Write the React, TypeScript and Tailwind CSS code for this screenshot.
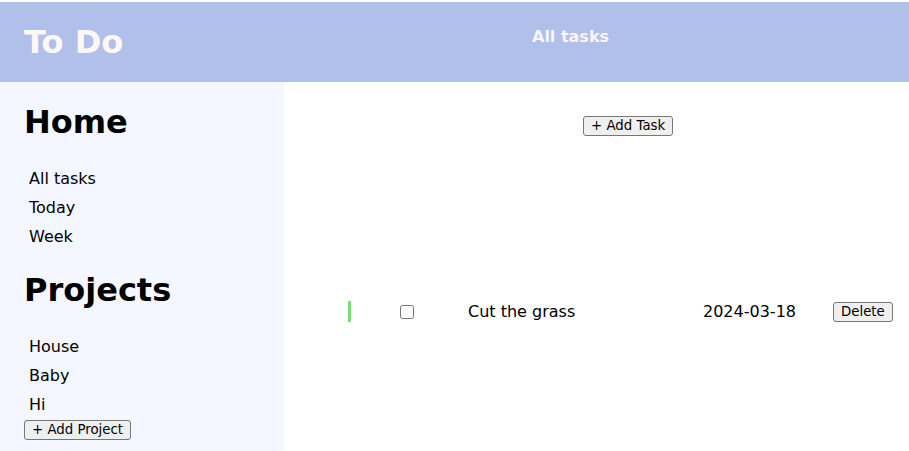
import { useState } from "react";

interface Task {
  id: number;
  title: string;
  dueDate: string;
  done: boolean;
}

const HOME_LINKS = ["All tasks", "Today", "Week"];
const PROJECTS = ["House", "Baby", "Hi"];

const btn =
  "h-[20px] px-[7px] text-[13.33px] leading-none text-black bg-[#efefef] border border-[#767676] rounded-[3px] hover:bg-[#e5e5e5]";

const App = () => {
  const [tasks, setTasks] = useState<Task[]>([
    { id: 1, title: "Cut the grass", dueDate: "2024-03-18", done: false },
  ]);

  const toggle = (id: number) =>
    setTasks((t) => t.map((x) => (x.id === id ? { ...x, done: !x.done } : x)));

  const remove = (id: number) => setTasks((t) => t.filter((x) => x.id !== id));

  return (
    <div className="h-screen flex flex-col pt-[2px] bg-white font-['DejaVu_Sans',sans-serif] text-black">
      <header className="h-[80px] shrink-0 grid grid-cols-[284px_1fr] bg-[#b0c0ea]">
        <div className="flex items-center pl-6">
          <h1 className="text-[32px] font-bold text-[#fdf8f5] leading-none">To Do</h1>
        </div>
        <div className="pl-[248px] pt-[23px]">
          <h3 className="text-base font-bold text-[#f9f5fb]">All tasks</h3>
        </div>
      </header>

      <div className="flex-1 flex min-h-0">
        <aside className="w-[284px] shrink-0 bg-[#f4f7ff] pl-6 pt-[22px]">
          <h1 className="text-[32px] font-bold leading-[37px]">Home</h1>
          <ul className="mt-[23px] pl-[5px]">
            {HOME_LINKS.map((l) => (
              <li key={l} className="leading-[29px]">
                {l}
              </li>
            ))}
          </ul>
          <h1 className="mt-[21px] text-[32px] font-bold leading-[37px]">Projects</h1>
          <ul className="mt-[23px] pl-[5px]">
            {PROJECTS.map((p) => (
              <li key={p} className="leading-[29px]">
                {p}
              </li>
            ))}
          </ul>
          <button className={`${btn} block mt-px`}>+ Add Project</button>
        </aside>

        <main className="flex-1">
          <div className="pt-[31px] pl-[299px]">
            <button className={btn}>+ Add Task</button>
          </div>

          <div className="mt-[164px]">
            {tasks.map((task) => (
              <div key={task.id} className="flex items-center h-[21px] pl-[64px]">
                <div className="w-[3px] h-[21px] bg-[#77dd77]" />
                <input
                  type="checkbox"
                  checked={task.done}
                  onChange={() => toggle(task.id)}
                  className="m-0 ml-[49px] w-[14px] h-[14px]"
                />
                <span className="ml-[54px] w-[235px]">{task.title}</span>
                <span className="w-[130px]">{task.dueDate}</span>
                <button className={btn} onClick={() => remove(task.id)}>
                  Delete
                </button>
              </div>
            ))}
          </div>
        </main>
      </div>
    </div>
  );
};

export default App;
